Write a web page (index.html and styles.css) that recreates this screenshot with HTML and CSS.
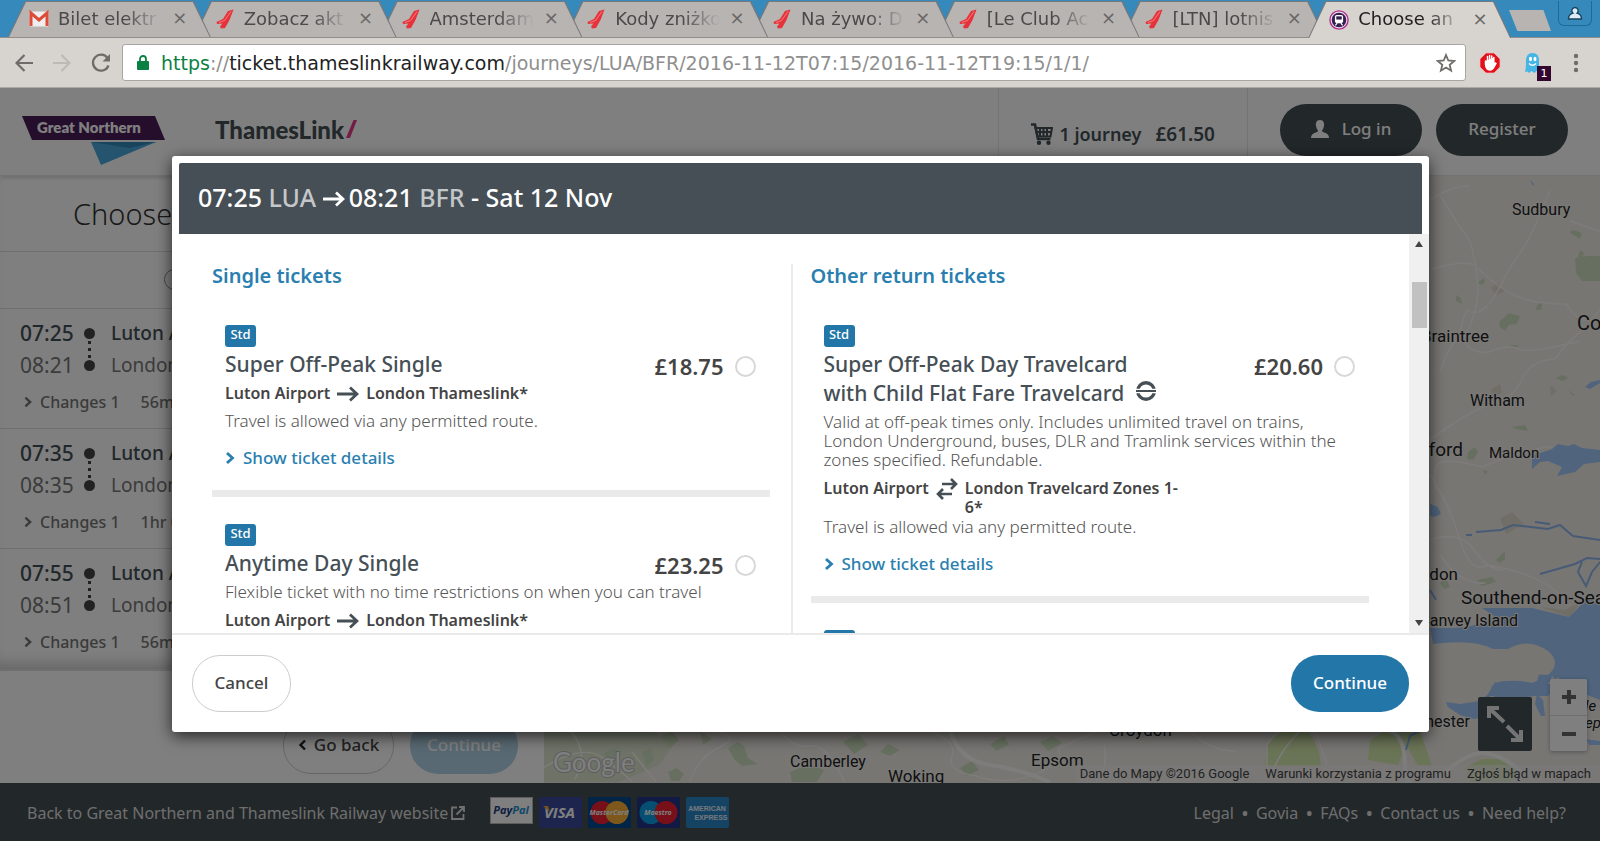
FILE: index.html
```
<!DOCTYPE html>
<html lang="en">
<head>
    <meta charset="UTF-8">
    <meta name="viewport" content="width=device-width, initial-scale=1.0">
    <title>Choose an outward journey</title>
    <link rel="stylesheet" href="styles.css">
</head>
<body>
    <svg class="sprite" aria-hidden="true">
        <symbol id="plane" viewBox="0 0 18 20">
            <path d="M17.5 0.5 L12 2 L7 10 L0.5 13 L1 15 L6.5 14.5 L4 17.5 L5 19.5 L9 19 L13.5 11 Z" fill="#e6323a"/>
            <path d="M15 2.5 L8.5 11.5 L3 13.5" stroke="#ff8f8f" stroke-width="0.8" fill="none"/>
        </symbol>
        <symbol id="arrow" viewBox="0 0 22 16">
            <path d="M0 8 H20 M13 1.5 L20 8 L13 14.5" fill="none" stroke="currentColor" stroke-width="2.8"/>
        </symbol>
        <symbol id="chevron" viewBox="0 0 10 14">
            <path d="M2 2 L7.5 7 L2 12" fill="none" stroke="currentColor" stroke-width="2.8"/>
        </symbol>
    </svg>

    <header class="browser">
        <div class="tabs">
            <div class="tab">
                <svg class="favicon" viewBox="0 0 20 16"><rect x="0.5" y="0.5" width="19" height="15" rx="1" fill="#eee"/><path d="M2 15 V2 L10 9 L18 2 V15" fill="none" stroke="#dd4b39" stroke-width="3"/></svg>
                <span class="tab-title">Bilet elektr</span><button class="tab-close" aria-label="Close tab">×</button>
            </div>
            <div class="tab">
                <svg class="favicon"><use href="#plane"/></svg>
                <span class="tab-title">Zobacz akt</span><button class="tab-close" aria-label="Close tab">×</button>
            </div>
            <div class="tab">
                <svg class="favicon"><use href="#plane"/></svg>
                <span class="tab-title">Amsterdam</span><button class="tab-close" aria-label="Close tab">×</button>
            </div>
            <div class="tab">
                <svg class="favicon"><use href="#plane"/></svg>
                <span class="tab-title">Kody zniżko</span><button class="tab-close" aria-label="Close tab">×</button>
            </div>
            <div class="tab">
                <svg class="favicon"><use href="#plane"/></svg>
                <span class="tab-title">Na żywo: D</span><button class="tab-close" aria-label="Close tab">×</button>
            </div>
            <div class="tab">
                <svg class="favicon"><use href="#plane"/></svg>
                <span class="tab-title">[Le Club Ac</span><button class="tab-close" aria-label="Close tab">×</button>
            </div>
            <div class="tab">
                <svg class="favicon"><use href="#plane"/></svg>
                <span class="tab-title">[LTN] lotnis</span><button class="tab-close" aria-label="Close tab">×</button>
            </div>
            <div class="tab active">
                <svg class="favicon" viewBox="0 0 22 22"><circle cx="11" cy="11" r="10" fill="#e9d9ea" stroke="#b0308c" stroke-width="1.5"/><circle cx="11" cy="11" r="8" fill="#34204f"/><rect x="6.5" y="5.5" width="9" height="9" rx="2" fill="#fff"/><rect x="8" y="7" width="6" height="3.5" fill="#34204f"/><path d="M7 17 L9 14.5 M15 17 L13 14.5" stroke="#fff" stroke-width="1.3"/></svg>
                <span class="tab-title">Choose an</span><button class="tab-close" aria-label="Close tab">×</button>
            </div>
            <button class="new-tab" aria-label="New tab"></button>
            <button class="profile" aria-label="Profile">
                <svg width="16" height="15" viewBox="0 0 16 15"><path d="M8 1.5 a3.2 3.2 0 0 1 2 5.7 Q14.5 8.5 14.5 13 H1.5 Q1.5 8.5 6 7.2 A3.2 3.2 0 0 1 8 1.5 Z" fill="#dcebf5" stroke="#17435f" stroke-width="1.4"/></svg>
            </button>
        </div>
        <div class="toolbar">
            <button class="tool" aria-label="Back"><svg width="18" height="18" viewBox="0 0 18 18"><path d="M18 9 H2 M9.5 1 L1.5 9 L9.5 17" fill="none" stroke="#6f6c6a" stroke-width="2.2"/></svg></button>
            <button class="tool" aria-label="Forward"><svg width="18" height="18" viewBox="0 0 18 18"><path d="M0 9 H16 M8.5 1 L16.5 9 L8.5 17" fill="none" stroke="#bdb9b6" stroke-width="2.2"/></svg></button>
            <button class="tool" aria-label="Reload"><svg width="20" height="20" viewBox="0 0 20 20"><path d="M16.5 5 A8 8 0 1 0 17.5 12.5" fill="none" stroke="#6f6c6a" stroke-width="2.3"/><path d="M19 1 V8.5 H11.5 Z" fill="#6f6c6a"/></svg></button>
            <div class="omnibox">
                <svg width="12" height="16" viewBox="0 0 12 16"><rect x="0" y="6" width="12" height="9" rx="1" fill="#0b8043"/><path d="M3 7 V4 a3 3 0 0 1 6 0 V7" fill="none" stroke="#0b8043" stroke-width="1.8"/></svg>
                <div class="url"><span class="scheme">https</span>://<span class="host">ticket.thameslinkrailway.com</span>/journeys/LUA/BFR/2016-11-12T07:15/2016-11-12T19:15/1/1/</div>
                <svg width="20" height="20" viewBox="0 0 20 20"><path d="M10 2 L12.3 7.5 L18.2 8 L13.7 11.9 L15.1 17.7 L10 14.6 L4.9 17.7 L6.3 11.9 L1.8 8 L7.7 7.5 Z" fill="none" stroke="#6f6c6a" stroke-width="1.8"/></svg>
            </div>
            <button class="extension" aria-label="Ad blocker"><svg width="22" height="22" viewBox="0 0 22 22"><path d="M7 1 H15 L21 7 V15 L15 21 H7 L1 15 V7 Z" fill="#e2121c" stroke="#f8b8b8" stroke-width="0.7"/><path d="M6.5 9 V12.5 Q7 18 11 18 Q13.5 18 15 15 L17 11.5 Q16 10.5 14.8 12 V5.5 M12.7 11 V4 M10.6 11 V3.5 M8.5 11 V4.5" fill="#fff" stroke="#fff" stroke-width="1.5" stroke-linecap="round"/></svg></button>
            <button class="extension" aria-label="Tracker blocker">
                <svg width="18" height="22" viewBox="0 0 18 22"><path d="M2 20 Q3 17 3 9 Q3 1 9.5 1 Q16 1 16 9 V17 L17 20 L13.5 19 L11.5 21 L8.5 19 L6 21 L4.5 19.5 Z" fill="#45b5e6"/><ellipse cx="7.5" cy="7" rx="1.5" ry="2.2" fill="#fff"/><ellipse cx="12" cy="7" rx="1.5" ry="2.2" fill="#fff"/><path d="M6 11.5 Q9.5 15 13 11.5" stroke="#fff" stroke-width="1.4" fill="none"/></svg>
                <span class="count">1</span>
            </button>
            <button class="menu" aria-label="Menu"><svg width="6" height="20" viewBox="0 0 6 20"><g fill="#6f6c6a"><circle cx="3" cy="3" r="2.2"/><circle cx="3" cy="10" r="2.2"/><circle cx="3" cy="17" r="2.2"/></g></svg></button>
        </div>
    </header>

    <div class="page">
        <div class="site-header">
            <a href="#" class="logo-gn" aria-label="Great Northern">
                <svg width="144" height="50" viewBox="0 0 144 50"><path d="M0 0 H133 L143 24 H10 Z" fill="#4a1a58"/><path d="M69 26 H134 L79 49 Z" fill="#4aa8dc"/><path d="M69 26 H134 L108 32 Z" fill="#3588b6"/><text x="15" y="17" class="gn-text">Great Northern</text></svg>
            </a>
            <a href="#" class="logo-tl">ThamesLink<svg width="11" height="18" viewBox="0 0 11 18"><path d="M7.5 0 H11 L4 18 H0 Z" fill="#e6388a"/></svg></a>
            <div class="basket">
                <svg width="22" height="22" viewBox="0 0 22 22"><path d="M0 1.5 H4 L7 16 H19.5" fill="none" stroke="#454f55" stroke-width="2.6"/><path d="M4.5 5 H21 L19.5 13.5 H6.5 Z M6 9 H20 M9 5 V13 M12.5 5 V13 M16 5 V13" fill="none" stroke="#454f55" stroke-width="2"/><circle cx="8" cy="19.8" r="2.2" fill="#454f55"/><circle cx="17.5" cy="19.8" r="2.2" fill="#454f55"/></svg>
                <span>1 journey</span><span class="total">£61.50</span>
            </div>
            <div class="account">
                <button class="pill dark login"><svg width="18" height="18" viewBox="0 0 18 18"><path d="M9 0 C12.5 0 13.5 3 13 6 Q12.5 9 11 10.3 Q11 12 13 12.5 Q18 13.5 18 18 H0 Q0 13.5 5 12.5 Q7 12 7 10.3 Q5.5 9 5 6 C4.5 3 5.5 0 9 0 Z" fill="#fff"/></svg>Log in</button>
                <button class="pill dark register">Register</button>
            </div>
        </div>

        <div class="main">
            <div class="journeys">
                <div class="journey-list">
                    <h1>Choose</h1>
                    <div class="direction"><input type="radio" name="direction" aria-label="Outward"></div>
                    <div class="journey">
                        <div class="stop from"><span>07:25</span><i></i><span>Luton A</span></div>
                        <div class="stop"><span>08:21</span><i></i><span>London</span></div>
                        <div class="changes"><svg width="10" height="12"><use href="#chevron"/></svg><a href="#">Changes 1</a><span>56m</span></div>
                    </div>
                    <div class="journey">
                        <div class="stop from"><span>07:35</span><i></i><span>Luton A</span></div>
                        <div class="stop"><span>08:35</span><i></i><span>London</span></div>
                        <div class="changes"><svg width="10" height="12"><use href="#chevron"/></svg><a href="#">Changes 1</a><span>1hr 0</span></div>
                    </div>
                    <div class="journey">
                        <div class="stop from"><span>07:55</span><i></i><span>Luton A</span></div>
                        <div class="stop"><span>08:51</span><i></i><span>London</span></div>
                        <div class="changes"><svg width="10" height="12"><use href="#chevron"/></svg><a href="#">Changes 1</a><span>56m</span></div>
                    </div>
                </div>
                <div class="journey-actions">
                    <button class="pill outline"><svg width="9" height="12" viewBox="0 0 9 12"><path d="M7 1.5 L2.5 6 L7 10.5" fill="none" stroke="#222" stroke-width="2.4"/></svg>Go back</button>
                    <button class="pill faded">Continue</button>
                </div>
            </div>

            <div class="map">
                <svg class="map-canvas" viewBox="544 176 1056 607" preserveAspectRatio="xMaxYMax slice">
                    <rect x="544" y="176" width="1056" height="607" fill="#f0ece7"/>
                    <!-- woodland and parks -->
                    <g fill="#cfe0c0">
                        <path d="M543 731 h110 l20 14 -14 20 -40 17 h-76 Z" opacity="0.6"/>
                        <path d="M1575 258 l12 -2 13 0 V281 h-18 l-6 -8 Z"/>
                        <path d="M1499 322 l10 -9 11 3 -3 8 -8 1 -4 6 -5 -4 Z"/>
                        <path d="M1478 282 l6 -4 1 5 -5 2 Z M1456 295 l5 3 1 6 -6 -3 Z M1537 305 l6 -3 -2 8 -5 0 Z M1569 232 l5 -2 8 3 -2 6 Z M1580 250 l4 3 -2 5 -4 -1 Z"/>
                        <path d="M1468 452 l7 -5 3 5 -5 8 -6 -1 Z M1555 378 l8 -3 5 3 -5 3 Z M1509 345 l10 0 -3 3 Z M1568 390 l7 5 -3 0 Z M1512 427 l13 -2 3 6 -12 -2 Z M1483 470 l5 1 -3 4 Z"/>
                        <path d="M1496 560 l9 -9 0 8 -5 4 Z M1477 580 l15 -3 4 5 -14 4 Z M1440 583 l6 -5 4 9 -6 2 Z M1435 689 l20 -12 -4 9 -14 6 Z"/>
                        <path d="M660 736 l12 -5 7 9 -9 8 Z M642 752 l9 -4 3 12 -8 6 Z M603 754 l10 -6 8 4 -11 8 Z M728 748 l10 -6 6 4 4 12 10 6 -16 2 -8 -7 Z M668 772 l9 -4 7 6 -5 7 h-8 Z M700 731 l12 8 -9 6 Z M790 772 l20 -8 14 6 -7 12 h-25 Z M843 742 l15 -8 10 11 -14 9 Z M880 752 l8 -8 12 6 -10 6 Z M960 768 l12 -7 7 9 -12 6 Z M990 744 l14 -8 5 9 -13 6 Z M1040 742 l13 -6 9 7 -14 8 Z"/>
                    </g>
                    <g fill="#d5e8ad">
                        <path d="M1267 744 l14 -13 h28 l10 20 2 15 h-56 Z M1370 741 l14 -10 h28 l-14 34 -30 -5 Z M1412 731 h8 l12 35 h-14 l-10 -18 Z M1464 768 l18 -9 h20 l16 9 -6 14 h-42 Z"/>
                    </g>
                    <g fill="#e2ddce"><path d="M1491 287 l8 -4 6 8 -9 4 Z M1490 390 l10 -6 2 9 -8 3 Z M1550 385 l7 6 -6 5 Z M1540 607 l25 3 16 -8 -12 15 Z M1500 518 l12 -6 12 12 -18 10 Z"/></g>
                    <!-- roads -->
                    <g fill="none" stroke="#faf8f5" stroke-width="1.5">
                        <path d="M1430 200 q20 -14 40 -14 M1440 195 q18 30 26 40 t12 50 q0 30 -14 52 M1550 190 q-20 50 -28 60 t-24 40 -31 20 q-10 20 -3 32 t25 10 q20 -8 30 -3 t61 -8"/>
                        <path d="M1478 268 q20 20 38 28 t50 8 q20 30 34 5 M1430 440 q40 -30 62 -36 t30 -25 33 -20 q22 -30 40 -35 M1436 490 q-5 -25 6 -28 t40 5 q50 -20 70 -20 M1440 372 q10 -30 20 -34 M1430 270 q30 -10 45 -5"/>
                        <path d="M1430 475 q20 30 30 65 t28 25 q60 10 80 40 M1430 540 q30 -10 44 10 t30 20 M1570 221 l30 10 M1440 555 q20 30 45 28"/>
                        <path d="M543 768 q40 -25 60 -10 t30 24 M570 731 q20 20 5 48 M632 752 q16 20 24 30 M690 782 q8 -25 30 -35 t-5 -16 M780 731 q14 18 30 15 t35 36 M928 731 q30 10 24 25 t24 20 q30 10 60 -2 t22 -25 q20 -10 40 -18 M1104 745 q5 20 -8 37 M1190 731 q20 20 45 20 M1267 770 V745 q20 -30 50 -10 l10 30 M1300 731 q-20 20 -27 40"/>
                    </g>
                    <path d="M950 731 q10 30 40 34 t60 17 M1390 731 q15 5 15 35 t30 16 q30 -30 48 -29 t40 20" fill="none" stroke="#fbfaf8" stroke-width="4"/>
                    <!-- estuaries and sea -->
                    <g fill="#a0c8fb">
                        <path d="M1532 456 l20 -7 6 -5 10 2 6 -2 8 4 18 2 V462 l-16 2 -9 8 -18 4 5 -9 -14 -6 -8 1 -8 7 Z"/>
                        <path d="M1430 504 l8 3 3 7 -7 3 -4 -1 Z M1585 387 l6 -5 9 -2 v3 l-10 6 Z M1530 180 l4 4 -1 2 Z"/>
                        <path d="M1430 628 h24 q28 -2 40 -12 l-12 -8 h50 l37 9 20 -20 11 8 V745 l-11 0 -20 -50 q-10 -5 -10 -18 l-10 5 -8 12 q-18 6 -30 2 h-20 l-5 4 -20 -6 q-25 10 -16 -4 l20 1 28 -7 q2 -10 18 -11 l32 2 q14 -12 0 -24 -20 -14 -40 -2 l-15 0 q-18 -10 -60 -5 Z"/>
                    </g>
                    <g fill="none" stroke="#8eb7ee" stroke-width="2">
                        <path d="M1476 532 l25 -2 12 -5 35 4 12 -4 13 11 27 4 M1540 574 l35 -10 12 -6 13 1 M1582 562 l-4 10 8 14 6 -14 8 -10 M1466 535 h6 M1535 522 l15 2 M1430 590 l6 10 M1406 750 l4 -14 10 -5"/>
                    </g>
                    <path d="M1430 646 q40 -5 56 5 t40 1 q20 5 11 29 -10 5 -30 0 l-14 2 q-3 14 -16 18 t-47 8 Z M1560 684 l-8 -8 q-6 15 -1 29 l0 30 49 6 V700 Z" fill="#f0ece7"/>
                    <g fill="#a0c8fb">
                        <path d="M1494 683 q20 -5 42 1 h24 l-12 12 -24 0 -30 4 Z M1446 702 l14 2 20 -3 14 4 -8 12 -12 2 -14 -4 -12 -8 Z M1537 694 l6 6 2 16 -4 0 -6 -12 Z"/>
                    </g>
                    <g class="town">
                        <text x="1512" y="215" class="t16">Sudbury</text>
                        <text x="1489" y="342" text-anchor="end" class="t17">Braintree</text>
                        <text x="1577" y="330" class="t20">Co</text>
                        <text x="1470" y="406" class="t16">Witham</text>
                        <text x="1463" y="456" text-anchor="end" class="t19">Chelmsford</text>
                        <text x="1489" y="458" class="t15">Maldon</text>
                        <text x="1458" y="580" text-anchor="end" class="t17">Basildon</text>
                        <text x="1461" y="604" class="t19">Southend-on-Sea</text>
                        <text x="1518" y="626" text-anchor="end" class="t16">Canvey Island</text>
                        <text x="1470" y="727" text-anchor="end" class="t16">Rochester</text>
                        <text x="1109" y="736" class="t17">Croydon</text>
                        <text x="790" y="767" class="t16">Camberley</text>
                        <text x="888" y="782" class="t17">Woking</text>
                        <text x="1031" y="766" class="t17">Epsom</text>
                        <text x="1585" y="711" class="t15 isle">le</text>
                        <text x="1585" y="728" class="t15 isle">ep</text>
                    </g>
                    <text x="553" y="772" class="google">Google</text>
                </svg>
                <div class="map-tools">
                    <button class="expand" aria-label="Expand map"><svg width="36" height="36" viewBox="0 0 36 36"><path d="M2 12 V2 H12 M2 2 L17 16 M34 24 V34 H24 M34 34 L20 20" fill="none" stroke="#e8e8e8" stroke-width="4"/></svg></button>
                    <div class="zoom"><button aria-label="Zoom in"><svg width="14" height="14" viewBox="0 0 14 14"><path d="M0 7 H14 M7 0 V14" stroke="#666" stroke-width="4"/></svg></button><button aria-label="Zoom out"><svg width="14" height="14" viewBox="0 0 14 14"><path d="M0 7 H14" stroke="#666" stroke-width="4"/></svg></button></div>
                </div>
                <div class="map-legal"><span>Dane do Mapy ©2016 Google</span><a href="#">Warunki korzystania z programu</a><a href="#">Zgłoś błąd w mapach</a></div>
            </div>
        </div>

        <footer class="site-footer">
            <a href="#" class="back-link">Back to Great Northern and Thameslink Railway website<svg width="14" height="14" viewBox="0 0 14 14"><path d="M6 1.5 H1 V13 H12.5 V8 M8 1 H13 V6 M13 1 L5.5 8.5" fill="none" stroke="#e0e0e0" stroke-width="1.8"/></svg></a>
            <div class="cards">
                <svg width="43" height="27" viewBox="0 0 43 27"><rect x="0.5" y="0.5" width="42" height="26" fill="#fff" stroke="#bbb"/><text x="21" y="17" text-anchor="middle" class="card-text" fill="#1a3c82">Pay<tspan fill="#1d8fd0">Pal</tspan></text></svg>
                <svg width="43" height="31" viewBox="0 0 43 31"><rect width="43" height="31" rx="2" fill="#3a4a9f"/><text x="5" y="21" class="card-text visa" fill="#fff">VISA</text><path d="M4 9 h5 l2 6 Z" fill="#f0a030"/></svg>
                <svg width="43" height="31" viewBox="0 0 43 31"><rect width="43" height="31" rx="2" fill="#004a90"/><circle cx="14" cy="15.5" r="11.5" fill="#ee2030"/><circle cx="29" cy="15.5" r="11.5" fill="#fbb034"/><text x="21" y="18" text-anchor="middle" class="card-text small" fill="#fff">MasterCard</text></svg>
                <svg width="43" height="31" viewBox="0 0 43 31"><rect width="43" height="31" rx="2" fill="#20348a"/><circle cx="14" cy="15.5" r="11.5" fill="#0aa0e4"/><circle cx="29" cy="15.5" r="11.5" fill="#ee2030"/><text x="21" y="18" text-anchor="middle" class="card-text small" fill="#fff">Maestro</text></svg>
                <svg width="43" height="31" viewBox="0 0 43 31"><rect width="43" height="31" rx="2" fill="#2a86c8"/><text x="21" y="14" text-anchor="middle" class="card-text amex">AMERICAN</text><text x="25" y="23" text-anchor="middle" class="card-text amex">EXPRESS</text></svg>
            </div>
            <nav class="links"><a href="#">Legal</a><b>•</b><a href="#">Govia</a><b>•</b><a href="#">FAQs</a><b>•</b><a href="#">Contact us</a><b>•</b><a href="#">Need help?</a></nav>
        </footer>

        <div class="overlay">
            <div class="modal" role="dialog" aria-label="Tickets">
                <h2 class="modal-header">07:25 <span class="code">LUA</span> <svg width="22" height="16"><use href="#arrow"/></svg>08:21 <span class="code">BFR</span> - Sat 12 Nov</h2>
                <div class="modal-body">
                    <div class="tickets">
                        <section class="column">
                            <h3>Single tickets</h3>
                            <div class="ticket">
                                <span class="std">Std</span>
                                <div class="ticket-top">
                                    <h4>Super Off-Peak Single</h4>
                                    <label class="price">£18.75<input type="radio" name="ticket"></label>
                                </div>
                                <div class="route"><span class="start">Luton Airport</span><svg width="22" height="16"><use href="#arrow"/></svg><span>London Thameslink*</span></div>
                                <p>Travel is allowed via any permitted route.</p>
                                <a href="#" class="details"><svg width="10" height="14"><use href="#chevron"/></svg>Show ticket details</a>
                            </div>
                            <div class="ticket">
                                <span class="std">Std</span>
                                <div class="ticket-top">
                                    <h4>Anytime Day Single</h4>
                                    <label class="price">£23.25<input type="radio" name="ticket"></label>
                                </div>
                                <p class="about">Flexible ticket with no time restrictions on when you can travel</p>
                                <div class="route"><span class="start">Luton Airport</span><svg width="22" height="16"><use href="#arrow"/></svg><span>London Thameslink*</span></div>
                            </div>
                        </section>
                        <section class="column">
                            <h3>Other return tickets</h3>
                            <div class="ticket">
                                <span class="std">Std</span>
                                <div class="ticket-top">
                                    <h4>Super Off-Peak Day Travelcard with Child Flat Fare Travelcard <svg class="roundel" width="20" height="20" viewBox="0 0 20 20"><circle cx="10" cy="10" r="8.3" fill="none" stroke="#454f55" stroke-width="3.4"/><path d="M0 10 H20" stroke="#fff" stroke-width="4.5"/><path d="M0 10 H20" stroke="#454f55" stroke-width="2"/></svg></h4>
                                    <label class="price">£20.60<input type="radio" name="ticket"></label>
                                </div>
                                <p class="about">Valid at off-peak times only. Includes unlimited travel on trains, London Underground, buses, DLR and Tramlink services within the zones specified. Refundable.</p>
                                <div class="route"><span class="start">Luton Airport</span><svg class="return" width="22" height="22" viewBox="0 0 22 22"><path d="M6 6 H20 M15 1 L20 6 L15 11 M16 16 H2 M7 11 L2 16 L7 21" fill="none" stroke="#454f55" stroke-width="2.6"/></svg><span>London Travelcard Zones 1-6*</span></div>
                                <p>Travel is allowed via any permitted route.</p>
                                <a href="#" class="details"><svg width="10" height="14"><use href="#chevron"/></svg>Show ticket details</a>
                            </div>
                            <div class="ticket"><span class="std"></span></div>
                        </section>
                    </div>
                    <div class="scrollbar" aria-hidden="true"><span class="up"></span><span class="thumb"></span><span class="down"></span></div>
                </div>
                <div class="modal-footer">
                    <button class="pill outline">Cancel</button>
                    <button class="pill blue">Continue</button>
                </div>
            </div>
        </div>
    </div>
</body>
</html>
```
FILE: styles.css
```
* {
    box-sizing: border-box;
}
body {
    margin: 0;
    height: 100vh;
    display: flex;
    flex-direction: column;
    overflow: hidden;
    font-family: "Noto Sans", sans-serif;
    font-size: 16px;
    color: #555;
}
h1, h2, h3, h4, p {
    margin: 0;
    font-weight: 500;
}
a {
    color: inherit;
    text-decoration: none;
}
button {
    font: inherit;
    border: 0;
    padding: 0;
    background: none;
    cursor: pointer;
}
svg {
    display: block;
    flex: none;
}
.sprite {
    position: absolute;
    width: 0;
    height: 0;
}

/* browser */
.browser {
    font-family: "DejaVu Sans", sans-serif;
    flex: none;
}
.tabs {
    display: flex;
    height: 38px;
    padding: 1px 8px 0;
    background: #3589bb;
    border-bottom: 1px solid #918d8b;
}
.tab {
    position: relative;
    flex: 0 1 12.8%;
    min-width: 0;
    margin-right: -17px;
    padding: 0 22px 2px 21px;
    display: flex;
    align-items: center;
    font-size: 18px;
    color: #4c4a49;
}
.tab::before, .tab::after {
    content: "";
    position: absolute;
    inset: 0;
    z-index: -1;
    background: #77787a;
    clip-path: polygon(17px 0, calc(100% - 17px) 0, 100% 100%, 0 100%);
}
.tab::after {
    inset: 1px 1px 0;
    background: #b8b4b2;
}
.tab:nth-child(1) { z-index: 8; }
.tab:nth-child(2) { z-index: 7; }
.tab:nth-child(3) { z-index: 6; }
.tab:nth-child(4) { z-index: 5; }
.tab:nth-child(5) { z-index: 4; }
.tab:nth-child(6) { z-index: 3; }
.tab:nth-child(7) { z-index: 2; }
.tab.active {
    z-index: 9;
    color: #222;
    margin-bottom: -1px;
}
.tab.active::after {
    background: #d7d3cf;
}
.favicon {
    width: 20px;
    height: 20px;
    margin-top: 2px;
}
.tab-title {
    flex: 1;
    margin: 0 8px 0 9px;
    white-space: nowrap;
    overflow: hidden;
    mask-image: linear-gradient(to right, #000 65%, transparent 100%);
}
.tab-close {
    font-size: 18px;
    width: 18px;
    line-height: 20px;
    color: #6a6766;
}
.new-tab {
    width: 42px;
    height: 21px;
    margin: 9px 0 0 15px;
    background: #b8b4b2;
    clip-path: polygon(0 0, 82% 0, 100% 100%, 20% 100%);
}
.profile {
    width: 34px;
    height: 25px;
    margin-left: auto;
    display: flex;
    align-items: center;
    justify-content: center;
    border: 1px solid #1f6a98;
    border-top: 0;
    border-radius: 0 0 6px 6px;
}
.toolbar {
    display: flex;
    align-items: center;
    height: 50px;
    padding: 0 21px 0 15px;
    background: #d7d3cf;
    border-bottom: 1px solid #b0acaa;
}
.tool {
    width: 38px;
}
.tool:nth-child(3) {
    width: 31px;
}
.omnibox {
    flex: 1;
    display: flex;
    align-items: center;
    height: 37px;
    padding: 0 9px 0 14px;
    background: #fff;
    border: 1px solid #a9a5a2;
    border-radius: 3px;
}
.url {
    flex: 1;
    padding-left: 12px;
    font-size: 19px;
    color: #8f8f8f;
    white-space: nowrap;
    overflow: hidden;
}
.scheme {
    color: #0b8043;
}
.host {
    color: #222;
}
.extension {
    position: relative;
    margin-left: 13px;
    width: 22px;
}
.extension + .extension {
    margin-left: 22px;
}
.count {
    position: absolute;
    left: 14px;
    top: 14px;
    width: 14px;
    height: 15px;
    background: #33062f;
    color: #fff;
    font-size: 11px;
    line-height: 15px;
}
.menu {
    margin-left: 28px;
}

/* page */
.page {
    position: relative;
    flex: 1;
    min-height: 0;
    display: flex;
    flex-direction: column;
    background: #fff;
}
.site-header {
    position: relative;
    display: flex;
    height: 88px;
    padding-left: 22px;
    border-bottom: 1px solid #e4e4e4;
    box-shadow: 0 2px 4px rgba(0, 0, 0, 0.15);
}
.logo-gn {
    margin-top: 28px;
}
.gn-text {
    font: 800 15px Lato, sans-serif;
    fill: #fff;
}
.logo-tl {
    display: flex;
    align-items: center;
    height: 24px;
    margin: 29px 0 0 49px;
    font: 900 24px Lato, sans-serif;
    color: #454f55;
}
.logo-tl svg {
    margin-left: 2px;
}
.basket {
    display: flex;
    align-items: center;
    margin-left: auto;
    padding: 5px 32px 0;
    border-left: 1px solid #e8e8e8;
    border-right: 1px solid #e8e8e8;
    font-size: 18px;
    font-weight: 600;
    color: #454f55;
}
.basket svg {
    margin-right: 6px;
}
.total {
    margin-left: 14px;
    font-size: 19px;
}
.account {
    display: flex;
    gap: 14px;
    padding: 16px 32px 0;
}
.pill {
    display: flex;
    align-items: center;
    justify-content: center;
    padding-bottom: 2px;
    border-radius: 28px;
    font-size: 17px;
    font-weight: 500;
}
.pill.dark {
    height: 52px;
    padding-bottom: 3px;
    background: #454f55;
    color: #fff;
}
.login {
    width: 142px;
    gap: 13px;
}
.register {
    width: 132px;
}
.pill.outline {
    border: 1px solid #ccc;
    background: #fff;
    color: #444;
}
.pill.blue {
    background: #2376a8;
    color: #fff;
}
.main {
    flex: 1;
    min-height: 0;
    display: flex;
}
.journeys {
    width: 34%;
    padding-top: 3px;
    display: flex;
    flex-direction: column;
}
.journey-list {
    box-shadow: inset 0 -14px 14px -8px rgba(0, 0, 0, 0.2);
    border-bottom: 2px solid #ddd;
}
.journey-list h1 {
    height: 72px;
    padding-left: 73px;
    font-size: 29px;
    font-weight: 350;
    line-height: 70px;
    color: #333;
}
.direction {
    height: 58px;
    border: 1px solid #ddd;
    border-width: 1px 0;
    padding: 17px 0 0 164px;
}
input[type="radio"] {
    appearance: none;
    width: 21px;
    height: 21px;
    margin: 0;
    border: 2px solid #d8d8d8;
    border-radius: 50%;
    background: #fff;
}
.direction input {
    border: 1px solid #888;
}
.journey {
    height: 120px;
    padding: 8px 0 0 20px;
    border-bottom: 1px solid #ddd;
}
.journey:last-child {
    border: 0;
}
.stop {
    display: flex;
    align-items: center;
    height: 32px;
    font-size: 19px;
    color: #777;
}
.from {
    font-weight: 500;
    color: #454f55;
}
.stop span:first-child {
    width: 64px;
    font-size: 21px;
}
.stop i {
    position: relative;
    width: 11px;
    height: 11px;
    margin-right: 16px;
    border-radius: 50%;
    background: #444;
}
.from i::after {
    content: "";
    position: absolute;
    left: 4px;
    top: 13px;
    height: 17px;
    border-left: 3px dotted #444;
}
.changes {
    display: flex;
    align-items: center;
    gap: 7px;
    margin-top: 11px;
    padding-left: 3px;
    font-size: 16px;
    line-height: 20px;
    font-weight: 500;
    color: #777;
}
.changes span {
    margin-left: 14px;
}
.journey-actions {
    display: flex;
    justify-content: flex-end;
    gap: 16px;
    padding: 46px 26px 0;
}
.journey-actions .pill {
    height: 57px;
    width: 111px;
    gap: 7px;
}
.journey-actions .faded {
    width: 108px;
    background: #b3d3e6;
    color: #fff;
}
.map {
    position: relative;
    flex: 1;
    overflow: hidden;
}
.map-canvas {
    width: 100%;
    height: 100%;
}
.town, .google {
    font-family: Roboto, sans-serif;
    fill: #222;
    stroke: #f5f3ef;
    stroke-width: 2px;
    paint-order: stroke;
}
.t15 { font-size: 15px; }
.t16 { font-size: 16px; }
.t17 { font-size: 17px; }
.t19 { font-size: 19px; }
.t20 { font-size: 20px; }
.isle {
    font-style: italic;
}
.google {
    font-family: Lato, sans-serif;
    font-size: 26px;
    fill: #fff;
    stroke: #bbb;
}
.map-tools {
    position: absolute;
    right: 13px;
    bottom: 32px;
    display: flex;
    align-items: flex-end;
    gap: 18px;
}
.expand {
    display: flex;
    align-items: center;
    justify-content: center;
    width: 54px;
    height: 54px;
    border-radius: 2px;
    background: #454f55;
}
.zoom {
    width: 37px;
    border-radius: 2px;
    background: #fff;
    box-shadow: 0 1px 4px rgba(0, 0, 0, 0.3);
}
.zoom button {
    display: flex;
    align-items: center;
    justify-content: center;
    width: 100%;
    height: 36px;
}
.zoom button + button {
    border-top: 1px solid #ddd;
}
.map-legal {
    position: absolute;
    right: 0;
    bottom: 0;
    display: flex;
    gap: 16px;
    padding: 0 9px 0 4px;
    background: rgba(245, 245, 245, 0.6);
    font: 13px/18px Roboto, sans-serif;
    color: #444;
}
.site-footer {
    flex: none;
    display: flex;
    align-items: center;
    height: 58px;
    padding: 1px 34px 0 27px;
    background: #454f53;
    color: #ddd;
}
.back-link {
    display: flex;
    align-items: center;
    gap: 3px;
}
.cards {
    display: flex;
    gap: 6px;
    margin-left: 25px;
}
.card-text {
    font: italic 700 11px "Open Sans", sans-serif;
}
.card-text.visa {
    font-size: 15px;
}
.card-text.small {
    font-size: 7px;
}
.card-text.amex {
    font: 700 7px "Liberation Sans", sans-serif;
    fill: #e8f2fa;
}
.links {
    display: flex;
    gap: 8px;
    margin-left: auto;
}

/* ticket dialog */
.overlay {
    position: absolute;
    inset: 0;
    padding: 68px 171px 109px 172px;
    background: rgba(0, 0, 0, 0.5);
}
.modal {
    display: flex;
    flex-direction: column;
    height: 100%;
    background: #fff;
    border-radius: 3px;
    box-shadow: 0 4px 16px rgba(0, 0, 0, 0.7);
}
.modal-header {
    flex: none;
    margin: 7px 7px 0;
    height: 71px;
    padding-left: 19px;
    border-radius: 2px 2px 0 0;
    background: #454f55;
    color: #fff;
    font-size: 25px;
    line-height: 68px;
}
.modal-header svg {
    display: inline-block;
    margin-right: 4px;
}
.code {
    color: #c4c7ca;
}
.modal-body {
    flex: 1;
    min-height: 0;
    display: flex;
    overflow: hidden;
}
.tickets {
    flex: 1;
    display: grid;
    grid-template-columns: 1fr 1fr;
    padding: 30px 40px 0;
}
.column {
    padding-right: 21px;
}
.column + .column {
    padding: 0 0 0 18px;
    border-left: 2px solid #eaeaea;
}
.column h3 {
    font-size: 20px;
    font-weight: 600;
    line-height: 24px;
    color: #2a7fb0;
}
.ticket {
    padding: 27px 14px 23px 13px;
    border-bottom: 7px solid #eaeaea;
}
h3 + .ticket {
    padding-top: 37px;
}
.std {
    display: block;
    width: 31px;
    height: 22px;
    border-radius: 3px;
    background: #2376a8;
    color: #fff;
    font-size: 13px;
    font-weight: 500;
    line-height: 18px;
    text-align: center;
}
.ticket-top {
    display: flex;
    justify-content: space-between;
    align-items: flex-start;
    margin-top: 3px;
}
.ticket h4 {
    max-width: 340px;
    font-size: 21px;
    line-height: 29px;
    color: #454f55;
}
.roundel {
    display: inline-block;
    margin-left: 6px;
}
.price {
    display: flex;
    align-items: center;
    gap: 11px;
    height: 29px;
    padding-top: 3px;
    font-size: 22px;
    font-weight: 600;
    color: #444;
}
.ticket p {
    font-size: 17px;
    font-weight: 350;
    line-height: 19px;
    color: #555;
}
.ticket .about {
    margin: 4px 0 10px;
}
.route {
    display: flex;
    gap: 7px;
    max-width: 368px;
    min-height: 27px;
    margin-top: 5px;
    font-weight: 600;
    line-height: 19px;
    color: #444;
}
.route .start {
    white-space: nowrap;
}
.route svg {
    margin-top: 2px;
    color: #454f55;
}
.route .return {
    margin-top: -1px;
}
.details {
    display: flex;
    align-items: center;
    gap: 8px;
    margin-top: 18px;
    font-size: 17px;
    font-weight: 500;
    line-height: 19px;
    color: #2a7fb0;
}
.scrollbar {
    display: flex;
    flex-direction: column;
    align-items: center;
    width: 20px;
    padding: 7px 0;
    background: #f0f0f0;
}
.up, .down {
    border: 4px solid transparent;
    border-top: 0;
    border-bottom: 6px solid #444;
}
.down {
    margin-top: auto;
    border-bottom: 0;
    border-top: 6px solid #444;
}
.thumb {
    width: 15px;
    height: 46px;
    margin-top: 35px;
    background: #c1c1c1;
}
.modal-footer {
    flex: none;
    display: flex;
    justify-content: space-between;
    padding: 20px;
    border-top: 2px solid #eaeaea;
}
.modal-footer .pill {
    width: 99px;
    height: 57px;
}
.modal-footer .blue {
    width: 118px;
}
```
